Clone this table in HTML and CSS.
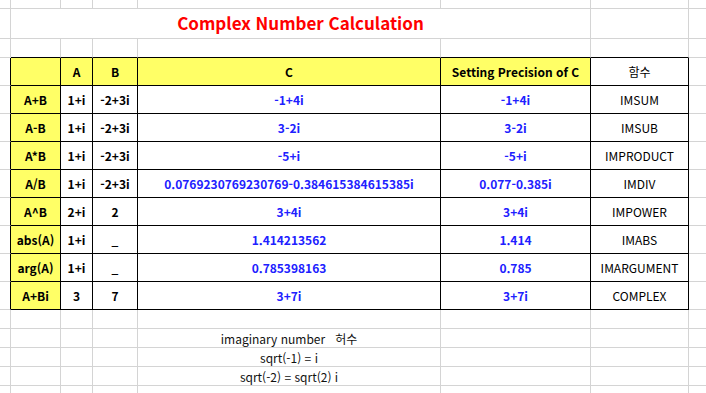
FILE: index.html
```html
<!DOCTYPE html>
<html lang="ko">
<head>
    <meta charset="UTF-8">
    <meta name="viewport" content="width=device-width, initial-scale=1.0">
    <title>Complex Number Calculation</title>
    <link rel="stylesheet" href="styles.css">
</head>
<body>

    <table class="sheet">
        <colgroup>
            <col class="w-edge">
            <col class="w-op">
            <col class="w-a">
            <col class="w-b">
            <col class="w-c">
            <col class="w-prec">
            <col class="w-func">
            <col class="w-rest">
        </colgroup>

        <tr class="r-top"><td></td><td></td><td></td><td></td><td></td><td></td><td></td><td></td></tr>
        <tr class="r-title">
            <td></td>
            <td colspan="5" class="title">Complex Number Calculation</td>
            <td></td><td></td>
        </tr>
        <tr class="r-gap">
            <td></td>
            <td class="above"></td><td class="above"></td><td class="above"></td>
            <td class="above"></td><td class="above"></td><td class="above"></td>
            <td></td>
        </tr>

        <!-- Calculation table -->
        <tr class="r-row">
            <td class="edge"></td>
            <td class="c head"></td>
            <td class="c head">A</td>
            <td class="c head">B</td>
            <td class="c head">C</td>
            <td class="c head">Setting Precision of C</td>
            <td class="c">함수</td>
            <td></td>
        </tr>
        <tr class="r-row">
            <td class="edge"></td>
            <td class="c head">A+B</td>
            <td class="c bold">1+i</td>
            <td class="c bold">-2+3i</td>
            <td class="c val">-1+4i</td>
            <td class="c val">-1+4i</td>
            <td class="c">IMSUM</td>
            <td></td>
        </tr>
        <tr class="r-row">
            <td class="edge"></td>
            <td class="c head">A-B</td>
            <td class="c bold">1+i</td>
            <td class="c bold">-2+3i</td>
            <td class="c val">3-2i</td>
            <td class="c val">3-2i</td>
            <td class="c">IMSUB</td>
            <td></td>
        </tr>
        <tr class="r-row">
            <td class="edge"></td>
            <td class="c head">A*B</td>
            <td class="c bold">1+i</td>
            <td class="c bold">-2+3i</td>
            <td class="c val">-5+i</td>
            <td class="c val">-5+i</td>
            <td class="c">IMPRODUCT</td>
            <td></td>
        </tr>
        <tr class="r-row">
            <td class="edge"></td>
            <td class="c head">A/B</td>
            <td class="c bold">1+i</td>
            <td class="c bold">-2+3i</td>
            <td class="c val">0.0769230769230769-0.384615384615385i</td>
            <td class="c val">0.077-0.385i</td>
            <td class="c">IMDIV</td>
            <td></td>
        </tr>
        <tr class="r-row">
            <td class="edge"></td>
            <td class="c head">A^B</td>
            <td class="c bold">2+i</td>
            <td class="c bold">2</td>
            <td class="c val">3+4i</td>
            <td class="c val">3+4i</td>
            <td class="c">IMPOWER</td>
            <td></td>
        </tr>
        <tr class="r-row">
            <td class="edge"></td>
            <td class="c head">abs(A)</td>
            <td class="c bold">1+i</td>
            <td class="c bold">_</td>
            <td class="c val">1.414213562</td>
            <td class="c val">1.414</td>
            <td class="c">IMABS</td>
            <td></td>
        </tr>
        <tr class="r-row">
            <td class="edge"></td>
            <td class="c head">arg(A)</td>
            <td class="c bold">1+i</td>
            <td class="c bold">_</td>
            <td class="c val">0.785398163</td>
            <td class="c val">0.785</td>
            <td class="c">IMARGUMENT</td>
            <td></td>
        </tr>
        <tr class="r-row">
            <td class="edge"></td>
            <td class="c head">A+Bi</td>
            <td class="c bold">3</td>
            <td class="c bold">7</td>
            <td class="c val">3+7i</td>
            <td class="c val">3+7i</td>
            <td class="c">COMPLEX</td>
            <td></td>
        </tr>

        <!-- Notes -->
        <tr class="r-gap"><td></td><td></td><td></td><td></td><td></td><td></td><td></td><td></td></tr>
        <tr class="r-gap"><td></td><td></td><td></td><td></td><td class="note">imaginary number &nbsp; 허수</td><td></td><td></td><td></td></tr>
        <tr class="r-gap"><td></td><td></td><td></td><td></td><td class="note">sqrt(-1) = i</td><td></td><td></td><td></td></tr>
        <tr class="r-gap"><td></td><td></td><td></td><td></td><td class="note">sqrt(-2) = sqrt(2) i</td><td></td><td></td><td></td></tr>
        <tr class="r-gap"><td></td><td></td><td></td><td></td><td></td><td></td><td></td><td></td></tr>
    </table>

</body>
</html>
```

FILE: styles.css
```css
/* General Styles */
body {
    margin: 0;
    background: #fff;
    overflow: hidden;
    font-family: 'Noto Sans CJK KR', 'Noto Sans', sans-serif;
    font-size: 12px;
    color: #000;
}

/* Sheet grid */
.sheet {
    border-collapse: separate;
    border-spacing: 0;
    table-layout: fixed;
    width: 720px;
}

.w-edge { width: 11px; }
.w-op   { width: 50px; }
.w-a    { width: 32px; }
.w-b    { width: 45px; }
.w-c    { width: 303px; }
.w-prec { width: 150px; }
.w-func { width: 98px; }
.w-rest { width: 31px; }

.sheet td {
    box-sizing: border-box;
    padding: 0;
    border-right: 1px solid #d4d4d4;
    border-bottom: 1px solid #d4d4d4;
    text-align: center;
    vertical-align: middle;
    line-height: 15px;
    white-space: nowrap;
}

.r-top td   { height: 9px; }
.r-title td { height: 30px; }
.r-gap td   { height: 19px; }
.r-row td   { height: 28px; }

/* Title */
.sheet .title {
    color: #ff0000;
    font-size: 17px;
    font-weight: bold;
    line-height: 20px;
    padding-bottom: 2px;
}

/* Table Styling */
.sheet .above {
    border-bottom-color: #000;
}

.sheet .edge {
    border-right-color: #000;
}

.sheet .c {
    border-right-color: #000;
    border-bottom-color: #000;
}

.sheet .head {
    background: #ffff66;
    font-weight: bold;
}

.sheet .bold {
    font-weight: bold;
}

.sheet .val {
    color: #2020ff;
    font-weight: bold;
}

.sheet .note {
    color: #111;
}
```
